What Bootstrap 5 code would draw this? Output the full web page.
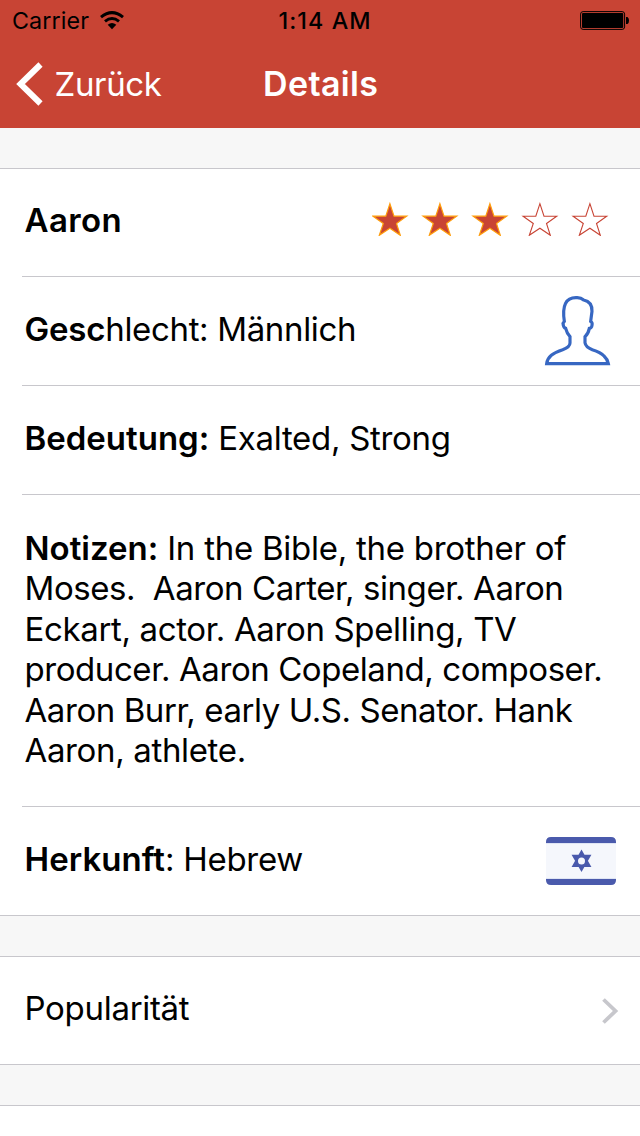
<!DOCTYPE html>
<html lang="de">
<head>
<meta charset="utf-8">
<meta name="viewport" content="width=device-width, initial-scale=1">
<title>Details</title>
<link href="https://cdn.jsdelivr.net/npm/bootstrap@5.3.0/dist/css/bootstrap.min.css" rel="stylesheet">
<style>
body{background:#f7f7f7;color:#000;font-family:Inter,"Liberation Sans",sans-serif;font-size:33px;line-height:40px}
svg{display:block;flex:none}
.app-head{background:#c84434;height:128px}
.status{height:40px;font-size:23.3px}
.status>div,.bar>div{flex:1 1 0}
.status span{line-height:42px}
.carrier{letter-spacing:.1px;padding-left:12px}
.wifi{margin-left:8.5px}
.clock{font-weight:500;letter-spacing:1.05px;padding-right:2px}
.bar{height:88px;color:#fff}
.back{letter-spacing:-.35px;margin-left:-.5px}
.bar b,.cell b{font-weight:600}
.bar b{font-size:34px;letter-spacing:.35px;line-height:39px;display:inline-block;margin-left:1.5px}
.group{background:#fff;border:solid #c8c7cc;border-width:1px 0;margin-top:40px}
.cell{height:109px;padding:32px 0 0 2.5px;margin-left:22px;border-bottom:1px solid #c8c7cc;white-space:pre;letter-spacing:-.3px}
.cell b{letter-spacing:0}
.cell:first-child{height:108px;padding-top:31px}
.cell:last-child{border-bottom:0;height:108px}
.group .notes{height:312px;padding-top:33px;line-height:40.4px;letter-spacing:-.43px}
.only .cell:last-child{height:107px}
.cell .first-name{letter-spacing:.4px}
.cell .gender{letter-spacing:-.35px}
.cell .gender b{letter-spacing:-.2px}
.cell .origin b{letter-spacing:.05px}
.lead-line span{letter-spacing:-.26px}
.notes .loose{letter-spacing:-.35px}
.person{margin-top:-14px}
.flag{margin-top:-2px}
.more{height:31px;border-bottom:0}
</style>
</head>
<body>
<header class="app-head">
  <div class="status d-flex text-black">
    <div class="carrier d-flex"><span>Carrier</span>
      <svg class="wifi" width="28" height="40" viewBox="0 0 28 40"><g fill="none" stroke="#000" stroke-width="3"><path d="M3 17.100Q14 8.200 25 17.100"/><path d="M7 21.300Q14 15.700 21 21.300"/></g><path d="M9.700 24.700Q14 21.400 18.300 24.700L14 29.200Z"/></svg>
    </div>
    <div class="clock text-center"><span>1:14 AM</span></div>
    <div class="d-flex justify-content-end"><svg width="62" height="40" viewBox="0 0 62 40"><rect x="2.600" y="11.600" width="44" height="17.800" rx="2.500" fill="none" stroke="#000"/><rect x="4" y="13" width="41.200" height="15" rx="1"/><path d="M48 17h1.500q1.500 1 1.500 3.500t-1.500 3.500H48z"/></svg></div>
  </div>
  <nav class="bar d-flex">
    <div class="d-flex"><svg width="55" height="88" viewBox="0 0 55 88"><path d="M40.500 24.500L20.500 44L40.500 63.500" fill="none" stroke="#fff" stroke-width="6"/></svg><span class="back pt-4">Zurück</span></div>
    <div class="text-center pt-4"><b>Details</b></div>
    <div></div>
  </nav>
</header>
<main>
  <section class="group">
    <div class="cell d-flex justify-content-between"><b class="first-name">Aaron</b><svg width="268" height="36" viewBox="0 0 268 36"><defs><path id="star" d="M17.900 3.700L22 16.200H34.700L24.500 23.500L28.300 35.300L17.900 28.200L7.300 35.300L11.300 23.500L1.100 16.200H13.800Z"/></defs><g fill="#c84434" stroke="#ff9d0a" stroke-width="1.200"><use href="#star"/><use href="#star" x="50"/><use href="#star" x="100"/></g><g fill="none" stroke="#c84434" stroke-width="1.100"><use href="#star" x="150"/><use href="#star" x="200"/></g></svg></div>
    <div class="cell d-flex justify-content-between"><span class="gender"><b>Gesc</b>hlecht: Männlich</span><svg class="person" width="96" height="71" viewBox="43 44 288 213"><path d="M51 250Q53 235 65 225Q77 215 99 208Q121 200 121 188V169Q112 160 108 144Q101 142 100 129L104 123Q93 51 140 52Q153 51 162 59Q188 64 187 93L183 123Q189 126 187 135Q186 143 179 144Q176 160 166 169V187Q168 200 188 208Q213 216 223 227Q233 236 236 250Z" fill="none" stroke="#3767c2" stroke-width="9.500"/></svg></div>
    <div class="cell"><b>Bedeutung:</b> Exalted, Strong</div>
    <div class="cell notes d-flex flex-column"><div class="lead-line d-flex"><b>Notizen:</b><span> In the Bible, the brother of</span></div><span>Moses.  Aaron Carter, singer. Aaron</span><span class="loose">Eckart, actor. Aaron Spelling, TV</span><span>producer. Aaron Copeland, composer.</span><span>Aaron Burr, early U.S. Senator. Hank</span><span class="loose">Aaron, athlete.</span></div>
    <div class="cell d-flex justify-content-between"><span class="origin"><b>Herkunft</b>: Hebrew</span><svg class="flag" width="94" height="48" viewBox="0 0 94 48"><path d="M0 5Q0 0 5 0H65Q70 0 70 5V43Q70 48 65 48H5Q0 48 0 43Z" fill="#4a5aac"/><path d="M0 6H70V42H0Z" fill="#dfe5f4"/><path d="M0 7H70V41H0Z" fill="#f5f7fc"/><path d="M35.500 14.500L43.700 29H27.300ZM35.500 33L27.300 18.800H43.700Z" fill="#4a5aac" stroke="#4a5aac" stroke-width="2"/><circle cx="35.500" cy="23.900" r="3.500" fill="#f5f7fc"/></svg></div>
  </section>
  <section class="group only">
    <div class="cell d-flex justify-content-between"><span>Popularität</span><svg width="40" height="46" viewBox="0 0 40 46"><path d="M3.500 11.500L15.500 23L3.500 34.500" fill="none" stroke="#c7c7cc" stroke-width="3.800"/></svg></div>
  </section>
  <section class="group more"></section>
</main>
<script src="https://cdn.jsdelivr.net/npm/bootstrap@5.3.0/dist/js/bootstrap.bundle.min.js"></script>
</body>
</html>
